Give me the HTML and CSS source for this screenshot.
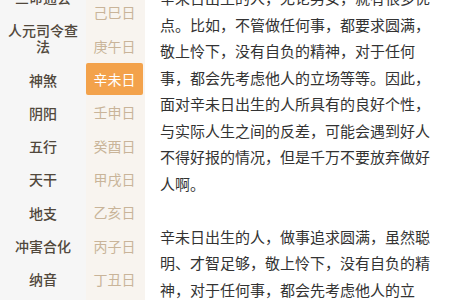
FILE: index.html
```html
<!DOCTYPE html>
<html lang="zh-CN">
  <head>
    <meta charset="UTF-8" />
    <meta name="viewport" content="width=device-width, initial-scale=1.0" />
    <title>辛未日</title>
    <link rel="stylesheet" href="styles.css">
  </head>
  <body>
    <div class="page">
      <!-- category menu -->
      <ul class="menu">
        <li class="menu-item">三命通会</li>
        <li class="menu-item">人元司令查法</li>
        <li class="menu-item">神煞</li>
        <li class="menu-item">阴阳</li>
        <li class="menu-item">五行</li>
        <li class="menu-item">天干</li>
        <li class="menu-item">地支</li>
        <li class="menu-item">冲害合化</li>
        <li class="menu-item">纳音</li>
      </ul>

      <!-- day list -->
      <ul class="days">
        <li class="day">戊辰日</li>
        <li class="day">己巳日</li>
        <li class="day">庚午日</li>
        <li class="day active">辛未日</li>
        <li class="day">壬申日</li>
        <li class="day">癸酉日</li>
        <li class="day">甲戌日</li>
        <li class="day">乙亥日</li>
        <li class="day">丙子日</li>
        <li class="day">丁丑日</li>
      </ul>

      <!-- article -->
      <div class="article">
        <p>辛未日出生的人，无论男女，就有很多优点。比如，不管做任何事，都要求圆满，敬上怜下，没有自负的精神，对于任何事，都会先考虑他人的立场等等。因此，面对辛未日出生的人所具有的良好个性，与实际人生之间的反差，可能会遇到好人不得好报的情况，但是千万不要放弃做好人啊。</p>
        <p>辛未日出生的人，做事追求圆满，虽然聪明、才智足够，敬上怜下，没有自负的精神，对于任何事，都会先考虑他人的立场。</p>
      </div>
    </div>
  </body>
</html>
```

FILE: styles.css
```css
body {
  margin: 0;
  font-family: "Noto Sans CJK SC", "Noto Sans", sans-serif;
  background: #fff;
}
.page {
  display: flex;
  height: 300px;
  overflow: hidden;
}
.menu,
.days {
  list-style: none;
  margin: 0;
  padding: 0;
}
.menu {
  width: 86px;
  flex-shrink: 0;
  background-color: #f6f6f6;
  margin-top: -19.7px;
}
.menu-item {
  padding: 8.65px 6px;
  line-height: 16px;
  font-size: 14px;
  font-weight: 500;
  text-align: center;
  color: #51483c;
}
.days {
  width: 59px;
  flex-shrink: 0;
  background-color: #f8f4ef;
  margin-top: -37px;
}
.day {
  height: 32px;
  line-height: 32px;
  margin: 0 2px 1.33px 0;
  font-size: 14px;
  text-align: center;
  color: #c9b499;
  border-radius: 2px;
}
.day.active {
  background-color: #f3a24b;
  color: #fff;
}
.article {
  width: 272px;
  padding-left: 15px;
  margin-top: -14.75px;
  font-size: 15px;
  line-height: 26.5px;
  color: #333;
}
.article p {
  margin: 0 0 26.5px;
}
```
